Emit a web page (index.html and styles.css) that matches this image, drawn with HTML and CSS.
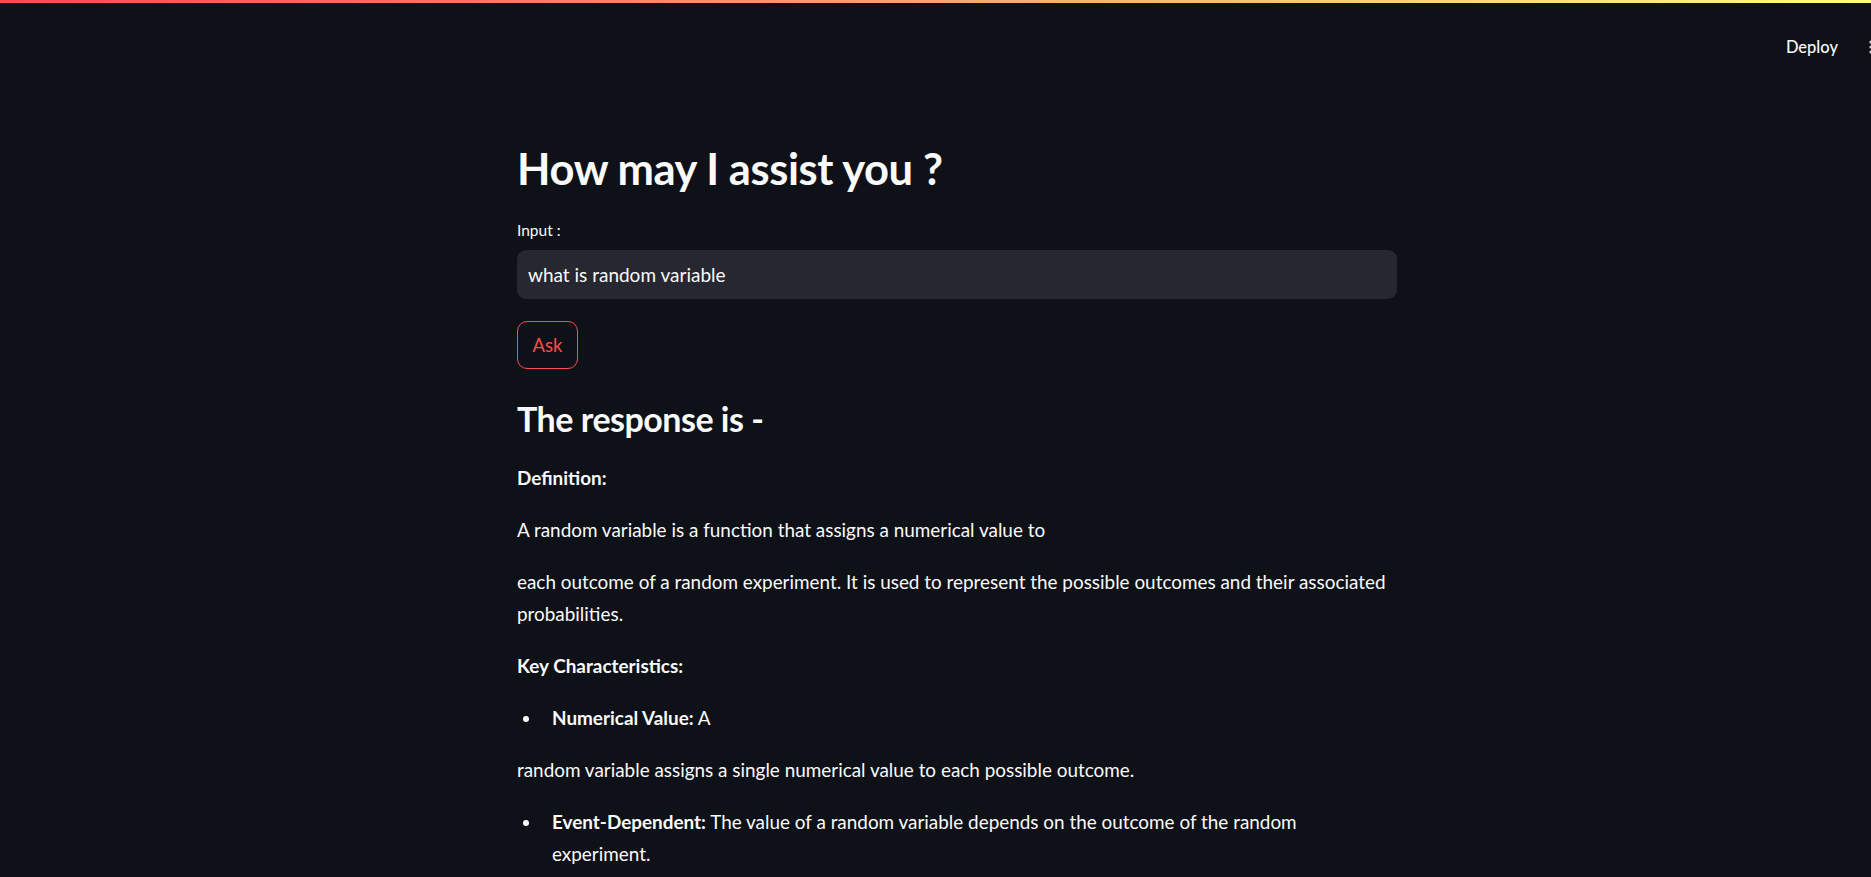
FILE: index.html
```html
<!DOCTYPE html>
<html lang="en">
<head>
<meta charset="utf-8">
<title>Streamlit</title>
<link rel="stylesheet" href="styles.css">
</head>
<body>
<div class="app">
  <div class="decoration"></div>
  <header class="header">
    <button class="deploy">Deploy</button>
    <span class="menu">
      <svg width="8" height="20" viewBox="0 0 8 20"><circle cx="4" cy="5" r="1.6" fill="#d5d6d8"/><circle cx="4" cy="10" r="1.6" fill="#d5d6d8"/><circle cx="4" cy="15" r="1.6" fill="#d5d6d8"/></svg>
    </span>
  </header>
  <main class="main">
    <div class="block">
      <h1 class="title">How may I assist you ?</h1>
      <label class="label">Input :</label>
      <div class="input">what is random variable</div>
      <button class="ask">Ask</button>
      <h2 class="subtitle">The response is -</h2>
      <div class="markdown">
        <p><strong>Definition:</strong></p>
        <p>A random variable is a function that assigns a numerical value to</p>
        <p>each outcome of a random experiment. It is used to represent the possible outcomes and their associated probabilities.</p>
        <p><strong>Key Characteristics:</strong></p>
        <ul><li><strong>Numerical Value:</strong> A</li></ul>
        <p>random variable assigns a single numerical value to each possible outcome.</p>
        <ul><li><strong>Event-Dependent:</strong> The value of a random variable depends on the outcome of the random experiment.</li></ul>
      </div>
    </div>
  </main>
</div>
</body>
</html>
```
FILE: styles.css
```css
html, body {
  margin: 0;
  padding: 0;
  background: #0e1117;
  height: 100%;
  overflow: hidden;
}
body {
  font-family: Lato, "Noto Sans", sans-serif;
  color: #fafafa;
}
.app {
  display: flex;
  flex-direction: column;
  height: 100%;
}
.decoration {
  height: 3px;
  flex: none;
  background: linear-gradient(90deg, #ff4b4b, #fffd80);
}
.header {
  height: 88px;
  flex: none;
  display: flex;
  align-items: center;
  justify-content: flex-end;
  overflow: hidden;
}
.deploy {
  background: transparent;
  border: none;
  color: #fafafa;
  font-family: Lato, sans-serif;
  font-size: 16.5px;
  font-weight: 500;
  padding: 0;
  margin-right: 29px;
}
.menu {
  display: flex;
  margin-right: -4px;
}
.main {
  display: flex;
  justify-content: center;
  padding-left: 43px;
  padding-top: 47px;
}
.block {
  width: 880px;
  display: flex;
  flex-direction: column;
  align-items: flex-start;
}
.title {
  margin: 0;
  font-size: 43.5px;
  line-height: 60px;
  font-weight: 700;
  letter-spacing: -0.4px;
}
.label {
  margin-top: 22px;
  font-size: 15.5px;
  line-height: 20px;
}
.input {
  margin-top: 10px;
  box-sizing: border-box;
  width: 100%;
  height: 49px;
  background: #262730;
  border-radius: 9px;
  padding-left: 11px;
  display: flex;
  align-items: center;
  font-size: 19px;
}
.ask {
  margin-top: 22px;
  box-sizing: border-box;
  width: 61px;
  height: 48px;
  background: transparent;
  border: 1px solid #ff4b4b;
  border-radius: 10px;
  color: #ff4b4b;
  font-family: Lato, sans-serif;
  font-size: 18.5px;
  padding: 0;
}
.subtitle {
  margin: 28px 0 0;
  font-size: 34px;
  line-height: 44px;
  font-weight: 700;
  letter-spacing: -0.5px;
}
.markdown {
  margin-top: 21px;
  width: 100%;
  font-size: 18.9px;
  line-height: 32px;
}
.markdown p {
  margin: 0 0 20px;
}
.markdown ul {
  margin: 0 0 20px;
  padding-left: 25px;
}
.markdown li {
  padding-left: 10px;
}
.markdown strong {
  font-weight: 700;
}
```
